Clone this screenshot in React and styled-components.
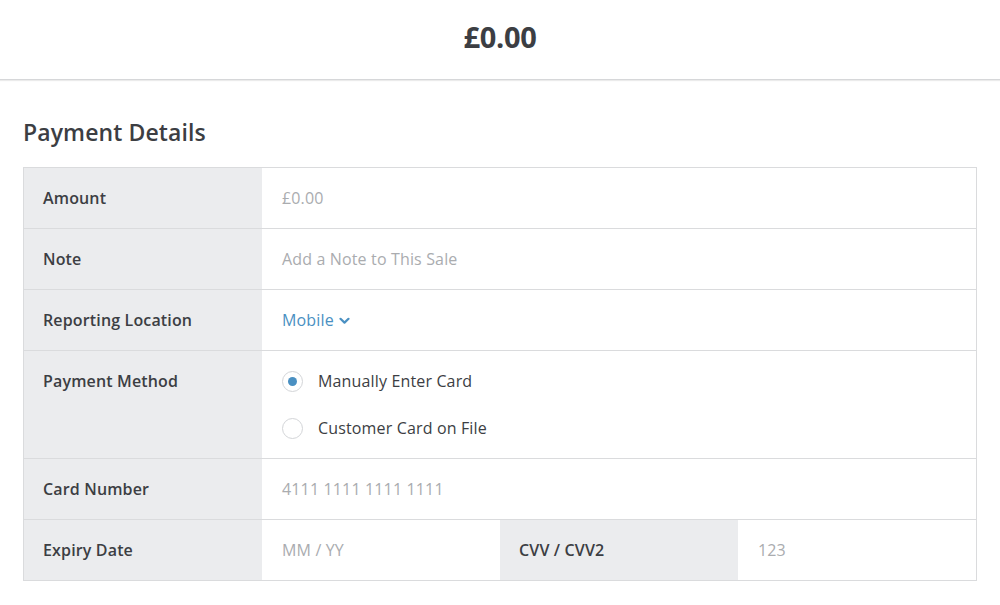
import React from "react";
import styled, { createGlobalStyle } from "styled-components";

const color = {
  text: "#3c3e43",
  border: "#dadbdd",
  labelBg: "#ebecee",
  placeholder: "#aaacaf",
  link: "#4a90c2",
};

const GlobalStyle = createGlobalStyle`
  html, body {
    margin: 0;
    padding: 0;
    background: #ffffff;
    font-family: "Open Sans", "Liberation Sans", Arial, sans-serif;
    color: ${color.text};
  }
  * { box-sizing: border-box; }
`;

const Header = styled.header`
  height: 80px;
  display: flex;
  align-items: center;
  justify-content: center;
  border-bottom: 1px solid #d6d7d9;
  box-shadow: 0 1px 1px rgba(0, 0, 0, 0.08);
  .total {
    font-size: 29px;
    font-weight: 700;
    letter-spacing: -0.3px;
    margin-top: -6px;
  }
`;

const Main = styled.main`
  padding: 36px 23px 24px;
`;

const Title = styled.h2`
  margin: 0 0 19px;
  font-size: 23px;
  font-weight: 600;
  line-height: 32px;
  letter-spacing: 0.1px;
`;

const Table = styled.div`
  display: grid;
  grid-template-columns: repeat(4, 1fr);
  border: 1px solid ${color.border};
  font-size: 16px;
  letter-spacing: 0.15px;
`;

const Cell = styled.div`
  display: flex;
  align-items: center;
  min-height: ${(p) => (p.first ? "60px" : "61px")};
  border-top: ${(p) => (p.first ? "none" : `1px solid ${color.border}`)};
`;

const Label = styled(Cell)`
  grid-column: span 1;
  background: ${color.labelBg};
  padding: ${(p) => (p.top ? "19px" : "0 19px")};
  align-items: ${(p) => (p.top ? "flex-start" : "center")};
  font-weight: 600;
`;

const Value = styled(Cell)`
  grid-column: span ${(p) => p.span || 3};
  padding: 0 20px;
  color: ${(p) => (p.placeholder ? color.placeholder : color.text)};
`;

const Options = styled.div`
  grid-column: span 3;
  padding: 19px 20px 19px;
  display: flex;
  flex-direction: column;
  gap: 25px;
  border-top: 1px solid ${color.border};
`;

const Option = styled.label`
  display: flex;
  align-items: center;
  gap: 15px;
  line-height: 22px;
  cursor: pointer;
`;

const Radio = styled.span`
  width: 21px;
  height: 21px;
  border-radius: 50%;
  border: 1px solid #d3d5d8;
  background: #fff;
  display: flex;
  align-items: center;
  justify-content: center;
  &::after {
    content: "";
    width: 9px;
    height: 9px;
    border-radius: 50%;
    background: ${(p) => (p.checked ? color.link : "transparent")};
  }
`;

const Dropdown = styled.span`
  color: ${color.link};
  display: inline-flex;
  align-items: center;
  gap: 5px;
  cursor: pointer;
  svg {
    margin-top: 2px;
  }
`;

const Chevron = () => (
  <svg width="11" height="8" viewBox="0 0 11 8">
    <path
      d="M1.5 1.8 L5.5 5.6 L9.5 1.8"
      fill="none"
      stroke={color.link}
      strokeWidth="2.2"
      strokeLinecap="round"
      strokeLinejoin="round"
    />
  </svg>
);

export default function App() {
  return (
    <>
      <GlobalStyle />
      <Header>
        <div className="total">£0.00</div>
      </Header>
      <Main>
        <Title>Payment Details</Title>
        <Table>
          <Label first>Amount</Label>
          <Value first placeholder="true">£0.00</Value>

          <Label>Note</Label>
          <Value placeholder="true">Add a Note to This Sale</Value>

          <Label>Reporting Location</Label>
          <Value>
            <Dropdown>
              Mobile <Chevron />
            </Dropdown>
          </Value>

          <Label top>Payment Method</Label>
          <Options>
            <Option>
              <Radio checked />
              Manually Enter Card
            </Option>
            <Option>
              <Radio />
              Customer Card on File
            </Option>
          </Options>

          <Label>Card Number</Label>
          <Value placeholder="true">4111 1111 1111 1111</Value>

          <Label>Expiry Date</Label>
          <Value span={1} placeholder="true">MM / YY</Value>
          <Label>CVV / CVV2</Label>
          <Value span={1} placeholder="true">123</Value>
        </Table>
      </Main>
    </>
  );
}
